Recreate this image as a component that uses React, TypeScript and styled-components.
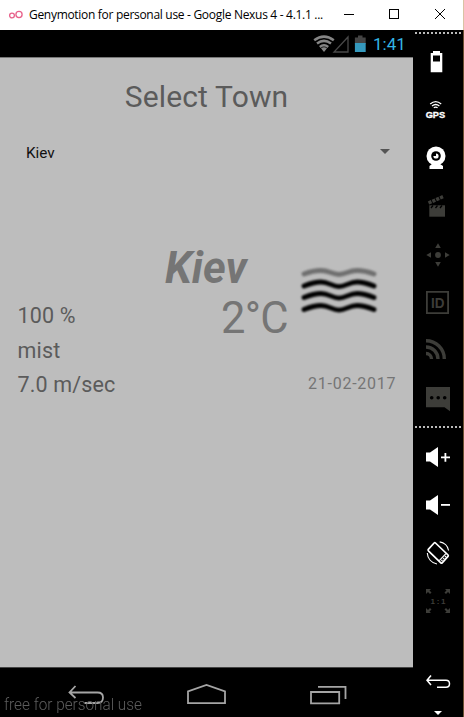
import React from 'react';
import styled, { createGlobalStyle } from 'styled-components';

const GlobalStyle = createGlobalStyle`
  * { box-sizing: border-box; }
  body { margin: 0; background: #000; overflow: hidden; }
  svg { display: block; flex: none; }
`;

const Window = styled.div`
  width: 464px;
  height: 717px;
  display: flex;
  flex-direction: column;
  background: #000;
  font-family: Roboto, sans-serif;
  overflow: hidden;
`;

const TitleBar = styled.header`
  height: 30px;
  flex: none;
  display: flex;
  align-items: center;
  background: #fff;
  border-right: 1px solid #d9c3a4;
  padding-left: 8px;
`;

const WindowTitle = styled.h1`
  margin: 0 0 0 6px;
  width: 307px;
  font: 400 12px/30px 'Open Sans', 'Noto Sans', sans-serif;
  letter-spacing: -0.3px;
  color: #000;
  white-space: pre;
`;

const Body = styled.div`
  flex: 1;
  display: flex;
  min-height: 0;
  border-right: 1px solid #6b5132;
`;

const Phone = styled.main`
  width: 413px;
  display: flex;
  flex-direction: column;
`;

const StatusBar = styled.div`
  height: 27px;
  display: flex;
  align-items: center;
  justify-content: flex-end;
  padding-right: 7px;
`;

const Clock = styled.span`
  width: 33px;
  font-size: 17px;
  line-height: 27px;
  padding-top: 2px;
  color: #33b5e5;
  white-space: nowrap;
`;

const Screen = styled.section`
  height: 611px;
  flex: none;
  background: #bdbdbd;
  border-top: 1px solid #777;
  border-bottom: 1px solid #444;
  display: flex;
  flex-direction: column;
`;

const Heading = styled.h2`
  margin: 21px 0 0;
  text-align: center;
  font-size: 30px;
  font-weight: 400;
  line-height: 35px;
  letter-spacing: 0.15px;
  color: #5b5b5b;
`;

const TownSelect = styled.div`
  margin-top: 23px;
  height: 32px;
  padding: 0 22px 0 26px;
  display: flex;
  align-items: center;
  justify-content: space-between;
  font-size: 15.3px;
  color: #111;

  svg { margin-top: -4px; }
`;

const Weather = styled.div`
  margin-top: 75px;
  display: grid;
  grid-template-columns: 160px 138px 1fr;
`;

const Stats = styled.ul`
  list-style: none;
  margin: 55px 0 0;
  padding: 0 0 0 17.5px;
`;

const Stat = styled.li`
  font-size: 21.5px;
  line-height: 34.6px;
  letter-spacing: 0.15px;
  color: #5b5b5b;
  white-space: nowrap;
`;

const Town = styled.div`
  padding-left: 5px;
  font-size: 43.5px;
  line-height: 50px;
  font-weight: 700;
  font-style: italic;
  color: #757575;
`;

const Temperature = styled.div`
  padding-left: 61px;
  font-size: 43.5px;
  line-height: 50px;
  letter-spacing: -0.7px;
  color: #757575;
  white-space: nowrap;
`;

const Conditions = styled.div`
  display: flex;
  flex-direction: column;
`;

const IconHolder = styled.div`
  padding-top: 18px;
  height: 80px;
`;

const DateLabel = styled.time`
  margin-top: 50px;
  padding-left: 10px;
  font-size: 16px;
  line-height: 20px;
  letter-spacing: 0.75px;
  color: #757575;
  white-space: nowrap;
`;

const NavBar = styled.nav`
  position: relative;
  height: 49px;
  flex: none;
`;

const Watermark = styled.span`
  position: absolute;
  left: 4px;
  top: 25px;
  font-size: 17px;
  line-height: 22px;
  font-weight: 300;
  transform: scaleX(0.9);
  transform-origin: left;
  color: #5d5d5d;
  white-space: nowrap;
`;

const Sidebar = styled.aside`
  width: 50px;
  display: flex;
  flex-direction: column;
`;

const Dots = styled.div<{ $after: number }>`
  height: 2px;
  flex: none;
  margin: 2px 1px ${p => p.$after}px 2px;
  background: repeating-linear-gradient(90deg, #bbb 0 2px, #000 2px 4px);
`;

const Tools = styled.div<{ $gap: number }>`
  display: flex;
  flex-direction: column;
  margin-bottom: ${p => p.$gap}px;
`;

const ToolButton = styled.button<{ $off?: boolean }>`
  width: 50px;
  height: 48px;
  padding: 0;
  border: 0;
  background: none;
  color: ${p => (p.$off ? '#3d3d39' : '#fff')};
`;

const Glyphs = styled.text`
  font-family: 'Liberation Sans', sans-serif;
  font-weight: 700;
  fill: currentColor;
`;

const Tool = ({ label, off, children }: { label: string; off?: boolean; children: React.ReactNode }) => (
  <ToolButton $off={off} aria-label={label}>
    <svg width="50" height="48" fill="currentColor">{children}</svg>
  </ToolButton>
);

const WaveIcon = () => (
  <svg width="84" height="56" viewBox="0 0 84 56" fill="none" strokeLinecap="round" strokeLinejoin="round">
    <defs>
      <filter id="soft" x="-10%" y="-20%" width="120%" height="140%"><feGaussianBlur stdDeviation="1" /></filter>
    </defs>
    <g filter="url(#soft)" strokeWidth="4.8">
      <path d="M6 12 Q15 8.5 23 8.5C31 8.5 34 12.5 41 12.5C48 12.5 51 8.5 59 8.5Q67 8.5 76 12" stroke="#707070" />
      {[24, 35.5, 47.5].map(y => (
        <path key={y} stroke="#000" d={`M6 ${y} Q16 ${y - 4} 23 ${y - 4} C31 ${y - 4} 34 ${y + 0.6} 41 ${y + 0.6} C48 ${y + 0.6} 51 ${y - 4} 59 ${y - 4} Q66 ${y - 4} 76 ${y}`} />
      ))}
    </g>
  </svg>
);

const SpeakerPath = () => <path d="M13 19.5h4l8-5.5v20l-8-5.5h-4z" />;

export default function App() {
  return (
    <>
      <GlobalStyle />
      <Window>
        <TitleBar>
          <svg width="15" height="14" fill="none" stroke="#e8628c" strokeWidth="1.3">
            <circle cx="4" cy="7.5" r="2.4" /><circle cx="11" cy="6.5" r="3.1" />
          </svg>
          <WindowTitle>Genymotion for personal use - Google Nexus 4 - 4.1.1 ...</WindowTitle>
          <svg width="127" height="30" fill="none" stroke="#000" strokeWidth="1">
            <path d="M8 14.5h10M53.5 9.5h9v9h-9z" shapeRendering="crispEdges" />
            <path d="M99 9l10 10M109 9l-10 10" />
          </svg>
        </TitleBar>
        <Body>
          <Phone>
            <StatusBar>
              <svg width="60" height="27">
                <g fill="none" stroke="#858585" strokeWidth="2.5">
                  <path d="M1.2 10.2Q11 3 20.8 10.2M4 13.6Q11 8.2 18 13.6M6.8 17Q11 13.6 15.2 17" />
                </g>
                <path d="M8 18.2Q11 16.5 14 18.2L11 22z" fill="#858585" />
                <path d="M35 7v15H21z" fill="none" stroke="#484848" strokeWidth="1.3" />
                <path d="M45 5.5h4.5v2h3.2V14H41.9V7.5H45z" fill="#444" />
                <path d="M41.9 13H52.7V22H41.9z" fill="#3599bd" />
              </svg>
              <Clock>1:41</Clock>
            </StatusBar>
            <Screen>
              <Heading>Select Town</Heading>
              <TownSelect>
                <span>Kiev</span>
                <svg width="12" height="8"><path d="M1 2h10L6 7z" fill="#555" /></svg>
              </TownSelect>
              <Weather>
                <Stats>
                  <Stat>100 %</Stat>
                  <Stat>mist</Stat>
                  <Stat>7.0 m/sec</Stat>
                </Stats>
                <div>
                  <Town>Kiev</Town>
                  <Temperature>2°C</Temperature>
                </div>
                <Conditions>
                  <IconHolder><WaveIcon /></IconHolder>
                  <DateLabel>21-02-2017</DateLabel>
                </Conditions>
              </Weather>
            </Screen>
            <NavBar>
              <svg width="413" height="49" viewBox="0 1 413 49" fill="none" stroke="#a5a5a5" strokeWidth="1.8">
                <path d="M75.5 19L69.5 25.5L75.5 31M70 25.5H97.5Q103 25.5 103 30.5Q103 36 97.5 36H84.5" />
                <path d="M188 36.2V24.5L206.5 18L225 24.5V36.2z" />
                <path d="M311 25h28.2v11.3H311zM318 19.8h27.5V32" />
              </svg>
              <Watermark>free for personal use</Watermark>
            </NavBar>
          </Phone>
          <Sidebar>
            <Dots $after={4} />
            <Tools $gap={2}>
              <Tool label="Battery">
                <path fillRule="evenodd" d="M20 13h7v2h2.3v19.3H17.7V15H20zM20 17.5v6h7v-6z" />
              </Tool>
              <Tool label="GPS">
                <path d="M17.2 18Q22.7 13.2 28.2 18M19 20Q22.7 17 26.4 20M20.8 21.8Q22.7 20.4 24.6 21.8" fill="none" stroke="currentColor" strokeWidth="1.3" />
                <Glyphs x="12.7" y="32" fontSize="8.5" textLength="19.5" lengthAdjust="spacingAndGlyphs" stroke="#fff" strokeWidth=".3">GPS</Glyphs>
              </Tool>
              <Tool label="Camera">
                <circle cx="23" cy="22" r="9.5" />
                <path d="M19 30h8l3 2v3H16.5v-3z" />
                <circle cx="23" cy="22" r="4.8" fill="#000" /><circle cx="23" cy="22" r="2.6" />
                <path d="M23 22v-3h-3v3z" fill="#000" />
              </Tool>
              <Tool label="Capture" off>
                <path d="M16.3 23.3H32v11.4H16.3z" />
                <path d="M15.5 21L30.5 14.5" stroke="currentColor" strokeWidth="3.5" strokeDasharray="3.2 1" />
                <path d="M18 26l2-2.5M22.5 26l2-2.5M27 26l2-2.5" stroke="#000" strokeWidth="1.3" />
              </Tool>
              <Tool label="Remote control" off>
                <circle cx="25" cy="25" r="2.9" />
                <path d="M22.2 18L25 13.3L27.8 18zM22.2 32h5.6L25 36.7zM18 22.2v5.6L13.3 25zM32 22.2v5.6L36.7 25z" />
              </Tool>
              <Tool label="Identifiers" off>
                <path d="M13.9 13.9h21.2v21.2H13.9z" fill="none" stroke="currentColor" strokeWidth="1.8" />
                <Glyphs x="18" y="30" fontSize="14.5" textLength="13.5" lengthAdjust="spacingAndGlyphs">ID</Glyphs>
              </Tool>
              <Tool label="Network" off>
                <path d="M13 14.7A18.3 18.3 0 0 1 31.3 33M13 21A12 12 0 0 1 25 33M13 27.5A5.5 5.5 0 0 1 18.5 33" fill="none" stroke="currentColor" strokeWidth="3.4" />
              </Tool>
              <Tool label="Messages" off>
                <path d="M13 13h24v24.3L31.5 33.3H13z" />
                <g fill="#000"><circle cx="18.7" cy="23.7" r="1.8" /><circle cx="25.2" cy="23.7" r="1.8" /><circle cx="31.7" cy="23.7" r="1.8" /></g>
              </Tool>
            </Tools>
            <Dots $after={5} />
            <Tools $gap={33}>
              <Tool label="Volume up">
                <SpeakerPath />
                <path d="M31.5 20h1.8v3.5h3.7v1.8h-3.7v3.5h-1.8v-3.5H28v-1.8h3.5z" />
              </Tool>
              <Tool label="Volume down">
                <SpeakerPath />
                <path d="M28 23h9v1.8h-9z" />
              </Tool>
              <Tool label="Rotate">
                <g fill="none" stroke="currentColor">
                  <path d="M22.5 14L35 26Q35.6 26.7 35 27.4L29.2 33.8Q28.5 34.4 27.8 33.8L15.4 21.8Q14.7 21 15.3 20.3L21.1 14Q21.8 13.3 22.5 14z" strokeWidth="1.7" />
                  <path d="M26.3 31.7L32.9 24.7" strokeWidth="1.2" />
                  <path d="M28.4 32L33.5 26.5" strokeWidth="1.2" strokeDasharray="1.6 1" />
                  <path d="M26.7 12.9A10.5 10.5 0 0 1 35.6 21.5M14.3 24A11.5 11.5 0 0 0 24 35" strokeWidth="1.1" />
                </g>
              </Tool>
              <Tool label="Pixel perfect" off>
                <path d="M13 12h5l-1.5 1.5 2 2-1.5 1.5-2-2L13 17zM37 12h-5l1.5 1.5-2 2 1.5 1.5 2-2L37 17zM13 36h5l-1.5-1.5 2-2-1.5-1.5-2 2L13 31zM37 36h-5l1.5-1.5-2-2 1.5-1.5 2 2L37 31z" />
                <Glyphs x="17.5" y="27" fontSize="8" textLength="15" lengthAdjust="spacing">1:1</Glyphs>
              </Tool>
            </Tools>
            <Tool label="Back">
              <path d="M18 17.5L14 22.3L18 27M14 22.3H33Q36.5 22.3 36.5 25.8Q36.5 29.3 33 29.3H24" fill="none" stroke="currentColor" strokeWidth="1.5" />
            </Tool>
            <svg width="50" height="11"><path d="M21 5h8L25 9z" fill="#fff" /></svg>
          </Sidebar>
        </Body>
      </Window>
    </>
  );
}
